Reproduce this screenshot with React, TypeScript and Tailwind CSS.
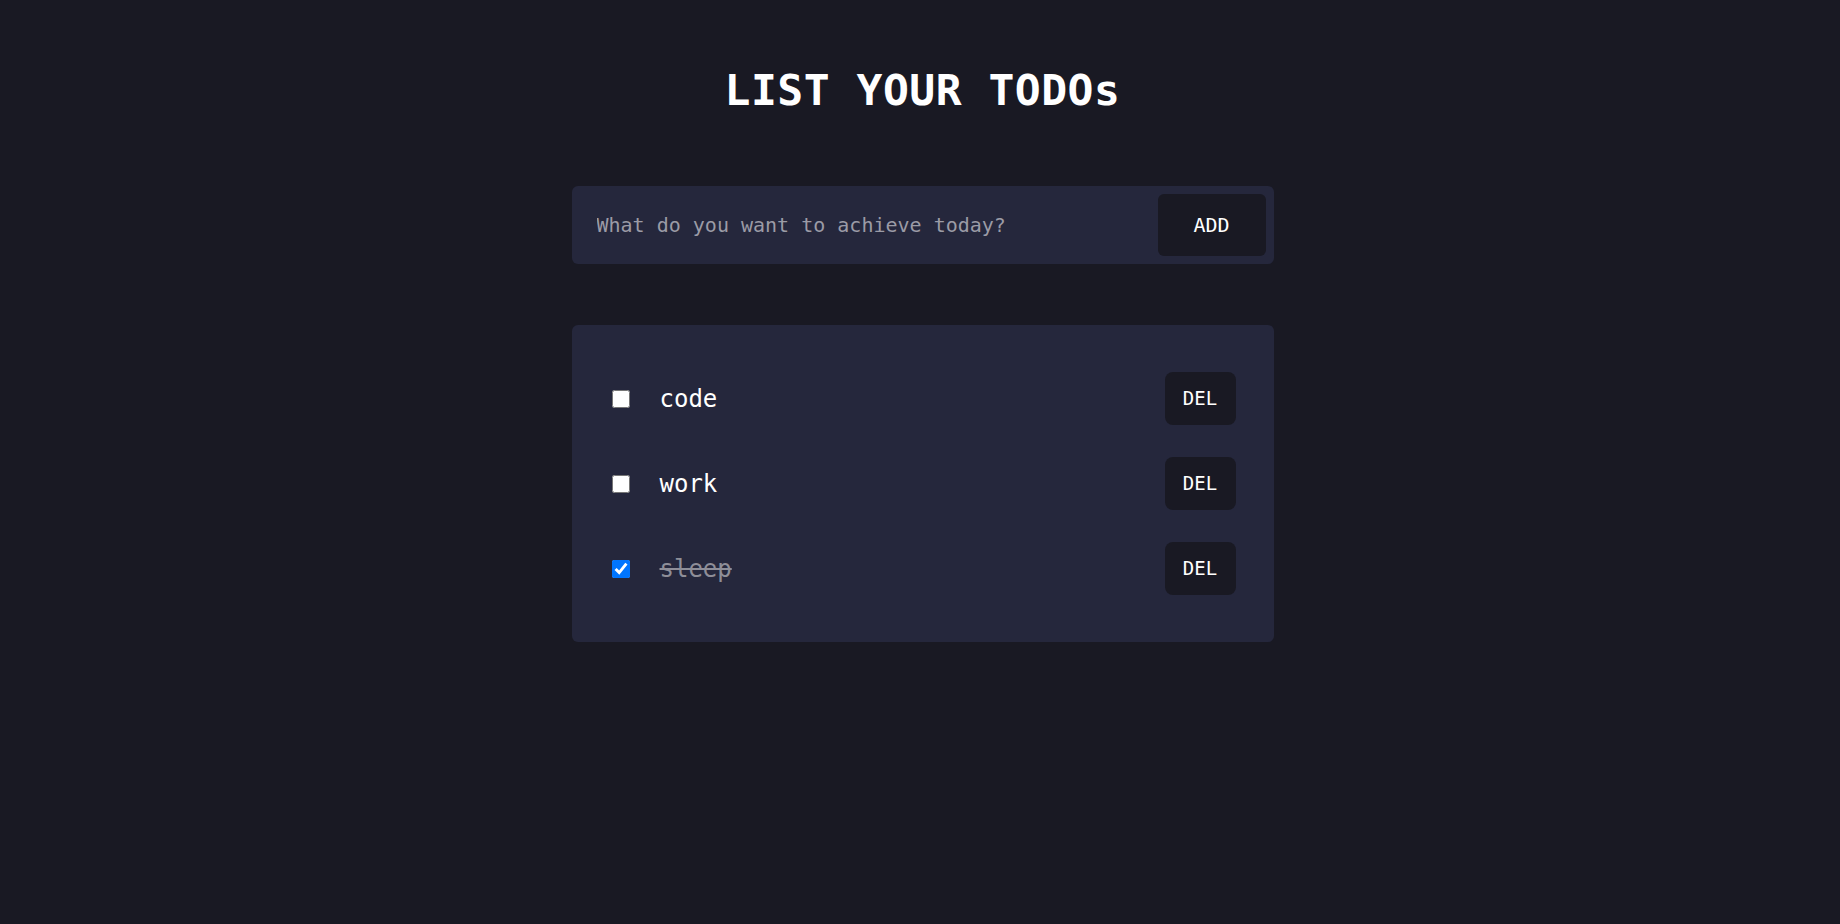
import React, { useState } from 'react';

type Todo = { id: number; text: string; done: boolean };

const initialTodos: Todo[] = [
    { id: 1, text: 'code', done: false },
    { id: 2, text: 'work', done: false },
    { id: 3, text: 'sleep', done: true },
];

const mono = { fontFamily: '"DejaVu Sans Mono", "Liberation Mono", monospace' };

const App: React.FC = () => {
    const [todos, setTodos] = useState<Todo[]>(initialTodos);
    const [draft, setDraft] = useState('');

    const addTodo = () => {
        if (!draft.trim()) return;
        setTodos([...todos, { id: Date.now(), text: draft.trim(), done: false }]);
        setDraft('');
    };

    const toggle = (id: number) =>
        setTodos(todos.map(t => (t.id === id ? { ...t, done: !t.done } : t)));

    const remove = (id: number) => setTodos(todos.filter(t => t.id !== id));

    return (
        <div className="min-h-screen bg-[#191923] text-white pl-[5px]" style={mono}>
            <div className="w-[702px] mx-auto pt-[64px]">
                <h1 className="text-center text-[43px] leading-[52px] font-bold tracking-[0.5px]">LIST YOUR TODOs</h1>

                <div className="mt-[70px] h-[78px] p-2 flex items-stretch bg-[#25273c] rounded-md">
                    <input
                        autoFocus
                        value={draft}
                        onChange={e => setDraft(e.target.value)}
                        onKeyDown={e => e.key === 'Enter' && addTodo()}
                        placeholder="What do you want to achieve today?"
                        className="flex-1 bg-transparent outline-none pl-[17px] text-[20px] text-white placeholder:text-[#9b9ba6]"
                        style={mono}
                    />
                    <button
                        onClick={addTodo}
                        className="w-[108px] bg-[#191923] rounded-md text-[20px] text-white"
                        style={mono}
                    >
                        ADD
                    </button>
                </div>

                <div className="mt-[61px] bg-[#25273c] rounded-md pt-[47px] pb-[47px] pl-[40px] pr-[38px] flex flex-col gap-[32px]">
                    {todos.map(todo => (
                        <div key={todo.id} className="h-[53px] flex items-center">
                            <input
                                type="checkbox"
                                checked={todo.done}
                                onChange={() => toggle(todo.id)}
                                className="w-[18px] h-[18px] accent-[#0075ff]"
                            />
                            <span
                                className={`ml-[30px] flex-1 text-[24px] ${todo.done ? 'line-through text-[#8e8e98]' : 'text-white'}`}
                            >
                                {todo.text}
                            </span>
                            <button
                                onClick={() => remove(todo.id)}
                                className="w-[71px] h-[53px] bg-[#191923] rounded-lg text-[19px] text-white"
                                style={mono}
                            >
                                DEL
                            </button>
                        </div>
                    ))}
                </div>
            </div>
        </div>
    );
};

export default App;
